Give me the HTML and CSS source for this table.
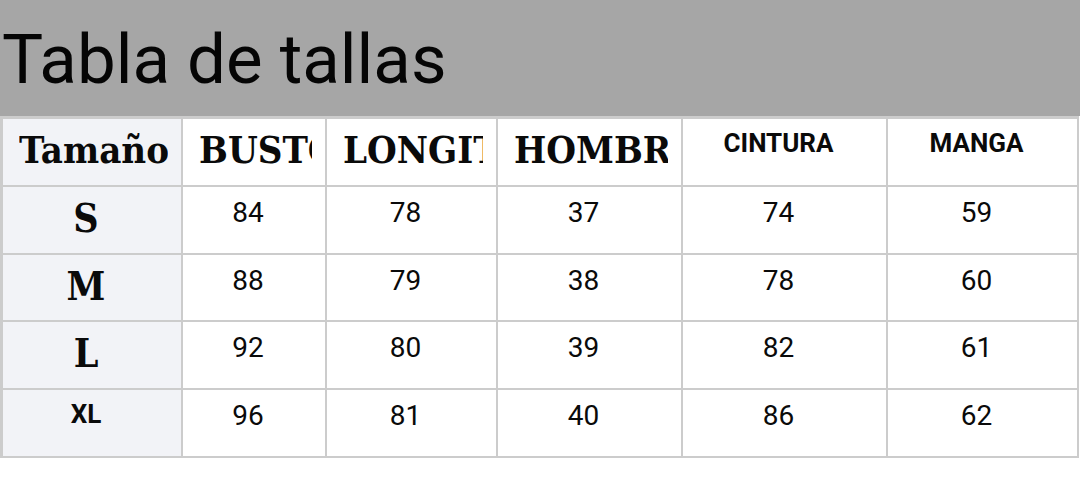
FILE: index.html
```html
<!DOCTYPE html>
<html lang="es">
<head>
<meta charset="utf-8">
<title>Tabla de tallas</title>
<link rel="stylesheet" href="styles.css">
</head>
<body>
<header class="title-bar"><h1 class="title">Tabla de tallas</h1></header>
<div class="size-table">
  <div class="cell head first clip"><div class="cut serif">Tamaño</div></div>
  <div class="cell head clip"><div class="cut serif">BUSTO</div></div>
  <div class="cell head clip"><div class="cut serif">LONGITUD</div></div>
  <div class="cell head clip"><div class="cut serif">HOMBRO</div></div>
  <div class="cell head sans-bold">CINTURA</div>
  <div class="cell head sans-bold">MANGA</div>

  <div class="cell first serif label">S</div>
  <div class="cell num">84</div><div class="cell num">78</div><div class="cell num">37</div><div class="cell num">74</div><div class="cell num">59</div>

  <div class="cell first serif label">M</div>
  <div class="cell num">88</div><div class="cell num">79</div><div class="cell num">38</div><div class="cell num">78</div><div class="cell num">60</div>

  <div class="cell first serif label">L</div>
  <div class="cell num">92</div><div class="cell num">80</div><div class="cell num">39</div><div class="cell num">82</div><div class="cell num">61</div>

  <div class="cell first sans-bold">XL</div>
  <div class="cell num">96</div><div class="cell num">81</div><div class="cell num">40</div><div class="cell num">86</div><div class="cell num">62</div>
</div>
</body>
</html>
```

FILE: styles.css
```css
html, body {
  margin: 0;
  padding: 0;
  background: #ffffff;
}

body {
  font-family: Roboto, "Liberation Sans", sans-serif;
  color: #0a0a0a;
}

.title-bar {
  background: #a6a6a6;
  height: 116px;
  box-sizing: border-box;
  padding: 19px 0 0 2px;
}

.title {
  margin: 0;
  font-family: Roboto, sans-serif;
  font-weight: 400;
  font-size: 69px;
  line-height: normal;
  color: #050505;
}

.size-table {
  display: grid;
  width: max-content;
  grid-template-columns: 178px 142px 169px 183px 203px 189px;
  grid-template-rows: 66px 66px 65px 66px 66px;
  gap: 2px;
  padding: 3px 2px 2px 3px;
  background: #cccccc;
}

.cell {
  background: #ffffff;
  overflow: hidden;
  white-space: nowrap;
  text-align: center;
  box-sizing: border-box;
  padding: 9px 28px 0 16px;
}

.cell.first {
  background: #f2f3f7;
}

.cell.clip {
  padding-right: 13px;
  text-align: left;
}

.cut {
  overflow: hidden;
}

.serif {
  font-family: "DejaVu Serif Condensed", "DejaVu Serif", "Liberation Serif", serif;
  font-stretch: condensed;
  font-weight: 700;
  font-size: 38px;
  line-height: 44px;
}

.label {
  font-size: 39px;
}

.sans-bold {
  font-family: Roboto, sans-serif;
  font-weight: 700;
  font-size: 26px;
  line-height: normal;
}

.num {
  font-family: Roboto, sans-serif;
  font-weight: 400;
  font-size: 28px;
  line-height: normal;
}
```
